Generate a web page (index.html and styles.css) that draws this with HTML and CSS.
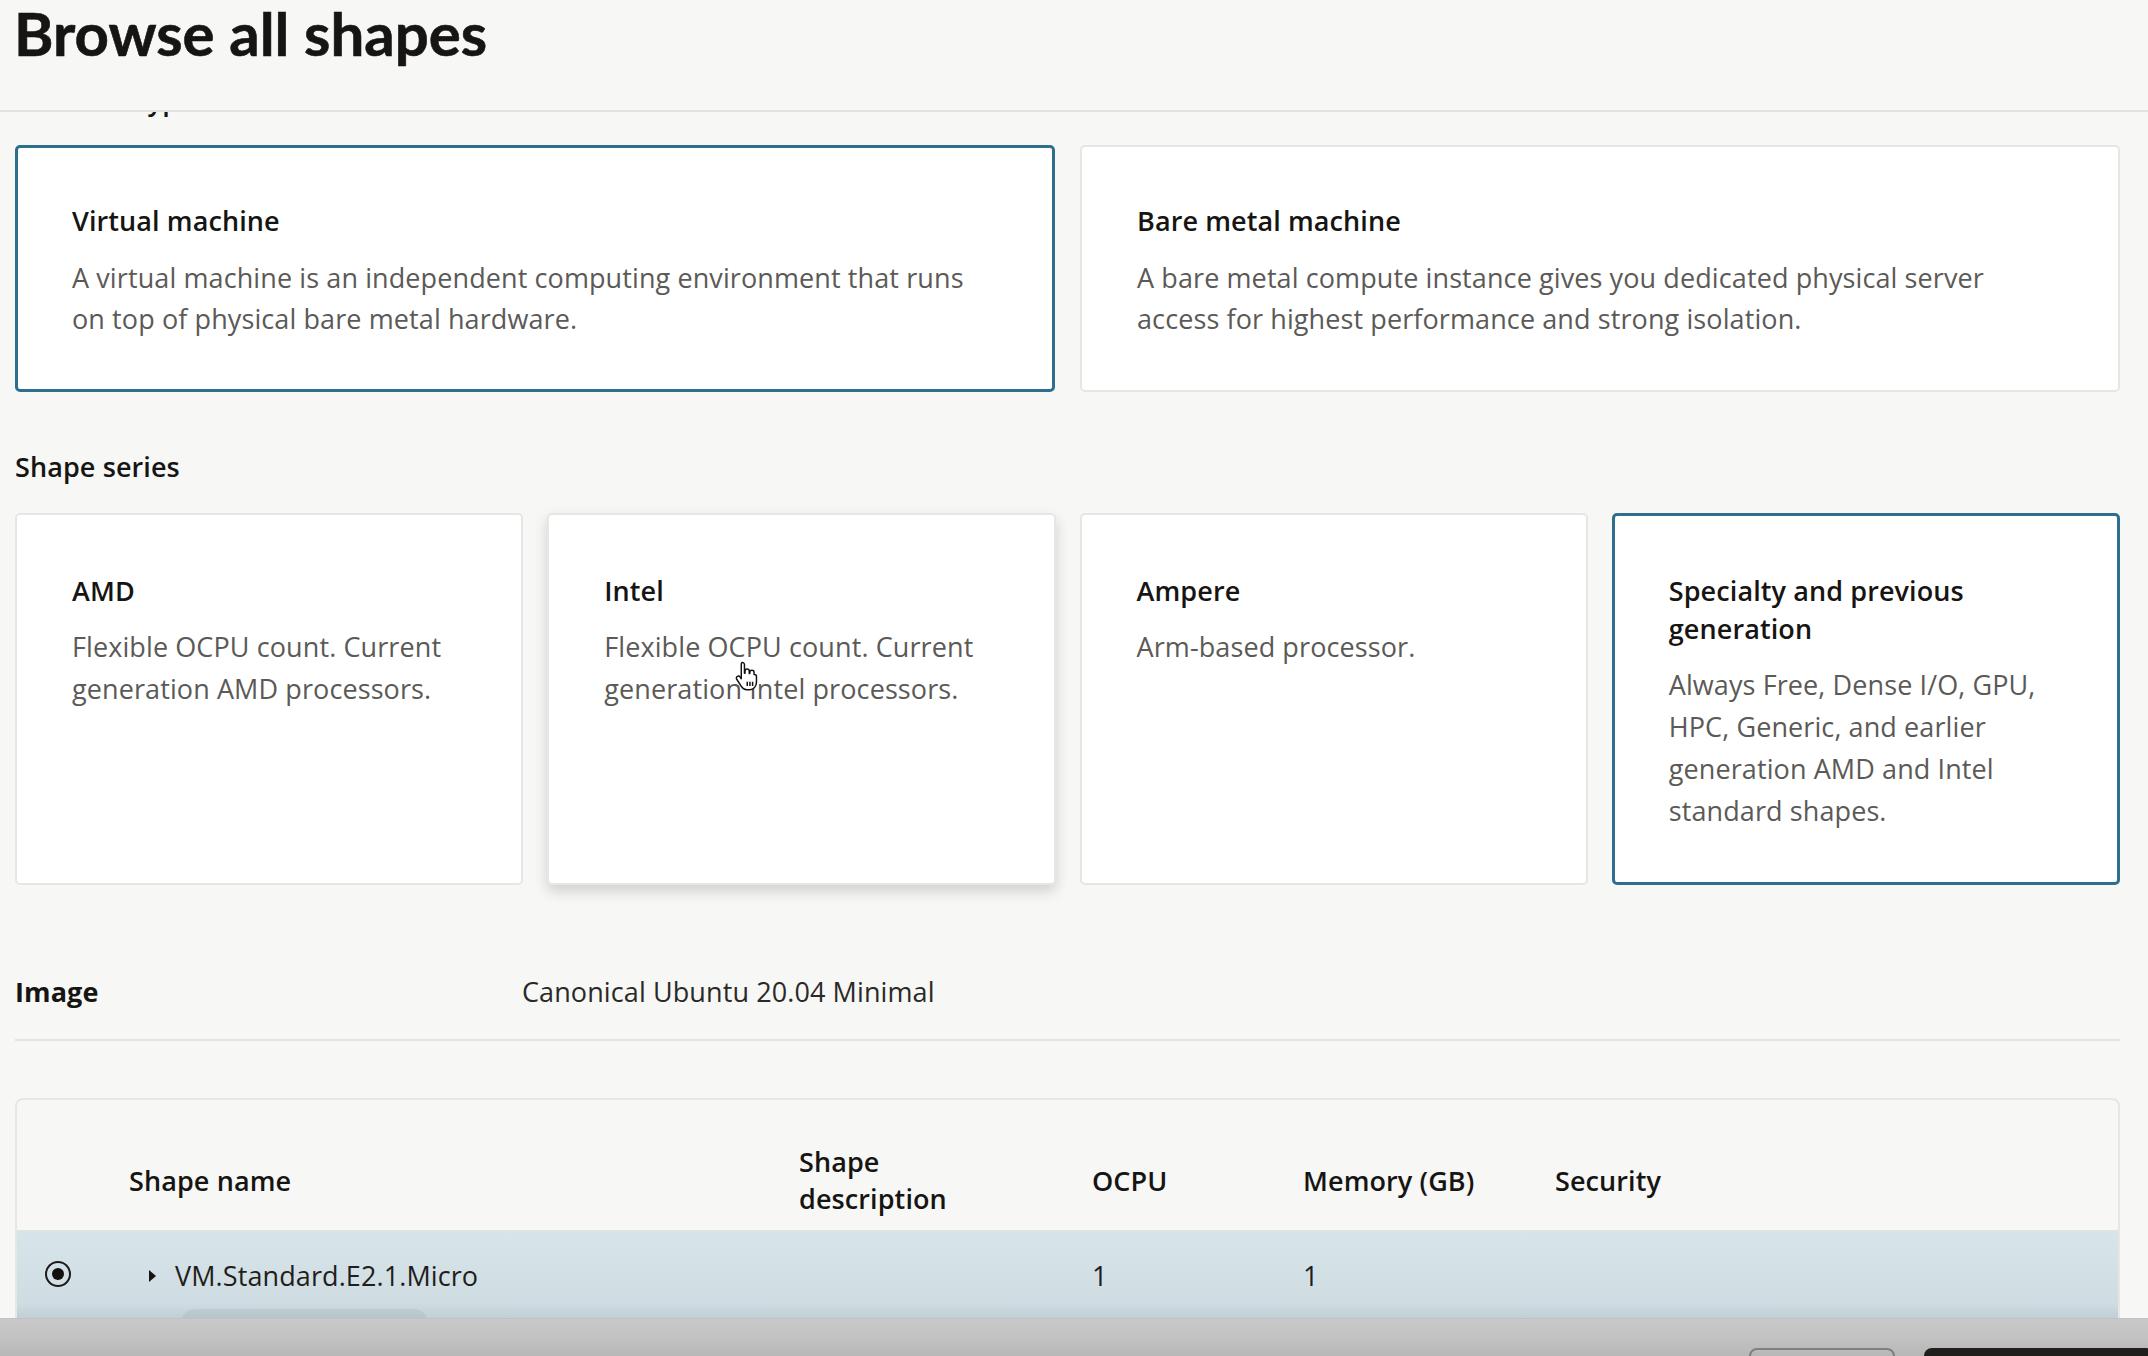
FILE: index.html
```html
<!DOCTYPE html>
<html lang="en">
<head>
<meta charset="utf-8">
<title>Browse all shapes</title>
<link rel="stylesheet" href="styles.css">
</head>
<body>
<div class="page">
  <header class="header">
    <h1 class="title">Browse all shapes</h1>
  </header>
  <main class="content">
    <div class="clipped-label">Instance type</div>
    <div class="type-grid">
      <div class="card selected">
        <div class="card-title">Virtual machine</div>
        <div class="card-desc">A virtual machine is an independent computing environment that runs on top of physical bare metal hardware.</div>
      </div>
      <div class="card">
        <div class="card-title">Bare metal machine</div>
        <div class="card-desc">A bare metal compute instance gives you dedicated physical server access for highest performance and strong isolation.</div>
      </div>
    </div>

    <div class="section-label">Shape series</div>
    <div class="series-grid">
      <div class="card series">
        <div class="card-title">AMD</div>
        <div class="card-desc">Flexible OCPU count. Current generation AMD processors.</div>
      </div>
      <div class="card series hover">
        <div class="card-title">Intel</div>
        <div class="card-desc">Flexible OCPU count. Current generation Intel processors.</div>
        <svg class="cursor" viewBox="0 0 18 24" width="24" height="32" aria-hidden="true">
          <path d="M5.5 1.2c.9 0 1.6.7 1.6 1.6v6.4h.4V7.6c0-.9.7-1.6 1.6-1.6s1.6.7 1.6 1.6v1.8h.4v-.8c0-.9.7-1.6 1.6-1.6s1.6.7 1.6 1.6v1.5h.2c.9 0 1.6.7 1.6 1.6v4.2c0 2.9-2.1 5.6-4.9 5.6H8.8c-1.9 0-3.2-1.1-4.2-2.7L1.3 13.7c-.5-.8-.3-1.8.5-2.2.7-.4 1.6-.1 2.1.6l.8 1.2V2.8c0-.9.2-1.6.8-1.6z" fill="#fff" stroke="#111" stroke-width="1.1" stroke-linejoin="round"/>
          <path d="M9.2 15.5v3.2M11.2 15.5v3.2M13.2 15.5v3.2" stroke="#111" stroke-width="1.1" fill="none"/>
        </svg>
      </div>
      <div class="card series">
        <div class="card-title">Ampere</div>
        <div class="card-desc">Arm-based processor.</div>
      </div>
      <div class="card series selected">
        <div class="card-title">Specialty and previous generation</div>
        <div class="card-desc">Always Free, Dense I/O, GPU, HPC, Generic, and earlier generation AMD and Intel standard shapes.</div>
      </div>
    </div>

    <div class="image-row">
      <div class="image-label">Image</div>
      <div class="image-value">Canonical Ubuntu 20.04 Minimal</div>
    </div>

    <div class="table">
      <div class="table-head">
        <div class="th"></div>
        <div class="th">Shape name</div>
        <div class="th">Shape<br>description</div>
        <div class="th">OCPU</div>
        <div class="th">Memory (GB)</div>
        <div class="th">Security</div>
      </div>
      <div class="table-row">
        <div class="td radio-cell"><span class="radio"><span class="radio-dot"></span></span></div>
        <div class="td name-cell">
          <div class="name-line"><span class="caret"></span><span class="shape-name">VM.Standard.E2.1.Micro</span></div>
          <div class="badge"></div>
        </div>
        <div class="td"></div>
        <div class="td">1</div>
        <div class="td">1</div>
        <div class="td"></div>
      </div>
    </div>
  </main>
  <footer class="footer">
    <span class="btn btn-outline"></span>
    <span class="btn btn-primary"></span>
  </footer>
</div>
</body>
</html>
```

FILE: styles.css
```css
* { box-sizing: border-box; }

html, body {
  margin: 0;
  padding: 0;
  height: 100%;
}

body {
  background: #f7f7f5;
  font-family: "Open Sans", Lato, "Liberation Sans", sans-serif;
  color: #161513;
  overflow: hidden;
}

.page {
  height: 1356px;
  display: flex;
  flex-direction: column;
}

.header {
  flex: 0 0 112px;
  border-bottom: 2px solid #e2e2df;
  padding-left: 14px;
}

.title {
  margin: 0;
  font-family: Lato, "Open Sans", sans-serif;
  font-size: 60px;
  font-weight: 700;
  line-height: 66px;
  color: #161513;
  -webkit-text-stroke: 0.6px #161513;
}

.content {
  flex: 1 1 auto;
  overflow: hidden;
  padding: 0 28px 0 15px;
}

.clipped-label {
  margin-top: -27px;
  padding-left: 4px;
  font-size: 27px;
  font-weight: 600;
  line-height: 30px;
  height: 31px;
}

.type-grid {
  margin-top: 29px;
  display: grid;
  grid-template-columns: 1fr 1fr;
  gap: 25px;
}

.card {
  position: relative;
  background: #ffffff;
  border: 2px solid #e6e6e3;
  border-radius: 5px;
  padding: 55px 50px 51px 55px;
}

.card.selected {
  border: 3px solid #2f6f8e;
  padding: 54px 49px 50px 54px;
}

.card-title {
  font-size: 27px;
  font-weight: 600;
  line-height: 38px;
  letter-spacing: 0.1px;
  color: #161513;
}

.card-desc {
  margin-top: 17px;
  font-size: 27px;
  font-weight: 400;
  line-height: 41px;
  letter-spacing: 0.1px;
  color: #5b5a57;
}

.section-label {
  margin-top: 56px;
  font-size: 27px;
  font-weight: 600;
  line-height: 38px;
  letter-spacing: 0.1px;
}

.series-grid {
  margin-top: 27px;
  display: grid;
  grid-template-columns: repeat(4, 1fr);
  gap: 24px;
}

.card.series {
  height: 372px;
  padding-top: 57px;
}

.card.series.selected {
  padding-top: 56px;
}

.card.series .card-desc {
  line-height: 42px;
  margin-top: 16px;
}

.card.hover {
  box-shadow: 0 6px 14px rgba(0, 0, 0, 0.16);
}

.cursor {
  position: absolute;
  left: 186px;
  top: 146px;
}

.image-row {
  margin-top: 88px;
  display: grid;
  grid-template-columns: 507px 1fr;
  line-height: 38px;
  font-size: 27px;
  letter-spacing: 0.1px;
  padding-bottom: 28px;
  border-bottom: 2px solid #e3e3e0;
}

.image-label {
  font-weight: 700;
}

.image-value {
  font-weight: 400;
  color: #2a2927;
}

.table {
  margin-top: 57px;
  border: 2px solid #e6e6e3;
  border-radius: 8px;
  background: #f7f7f5;
  overflow: hidden;
}

.table-head,
.table-row {
  display: grid;
  grid-template-columns: 112px 670px 293px 211px 252px 1fr;
}

.table-head {
  height: 131px;
  padding-top: 30px;
  align-items: center;
  border-bottom: 1px solid #e4e4e1;
}

.th {
  font-size: 27px;
  font-weight: 600;
  line-height: 37px;
  letter-spacing: 0.1px;
  color: #161513;
}

.table-row {
  height: 160px;
  padding-top: 26px;
  align-items: start;
  background: linear-gradient(180deg, #d7e4ea 0%, #cfdce2 45%, #bccad1 58%, #b9c6cd 100%);
}

.td {
  font-size: 27px;
  line-height: 38px;
  letter-spacing: 0.1px;
  color: #1f1e1c;
}

.radio-cell {
  padding-left: 28px;
  padding-top: 4px;
}

.radio {
  width: 26px;
  height: 26px;
  border: 2.5px solid #1b1b1b;
  border-radius: 50%;
  display: flex;
  align-items: center;
  justify-content: center;
}

.radio-dot {
  width: 12px;
  height: 12px;
  background: #111;
  border-radius: 50%;
}

.name-line {
  display: flex;
  align-items: center;
}

.caret {
  width: 0;
  height: 0;
  margin-left: 20px;
  margin-right: 19px;
  border-top: 6px solid transparent;
  border-bottom: 6px solid transparent;
  border-left: 7px solid #161513;
}

.shape-name {
  color: #1f1e1c;
}

.badge {
  margin-top: 14px;
  margin-left: 52px;
  width: 247px;
  height: 36px;
  border-radius: 14px;
  background: rgba(60, 80, 90, 0.08);
}

.footer {
  flex: 0 0 38px;
  display: flex;
  justify-content: flex-end;
  gap: 29px;
  padding-top: 29px;
  overflow: hidden;
  background: linear-gradient(180deg, #c9c9c9 0%, #c2c2c2 50%, #b7b7b7 100%);
  border-top: 1px solid #bcc3c6;
}

.btn {
  flex: 0 0 auto;
  display: block;
  height: 52px;
  border-radius: 8px;
}

.btn-outline {
  width: 146px;
  background: transparent;
  border: 2px solid #7f7f7d;
}

.btn-primary {
  width: 230px;
  margin-right: -6px;
  background: #201f1c;
}
```
